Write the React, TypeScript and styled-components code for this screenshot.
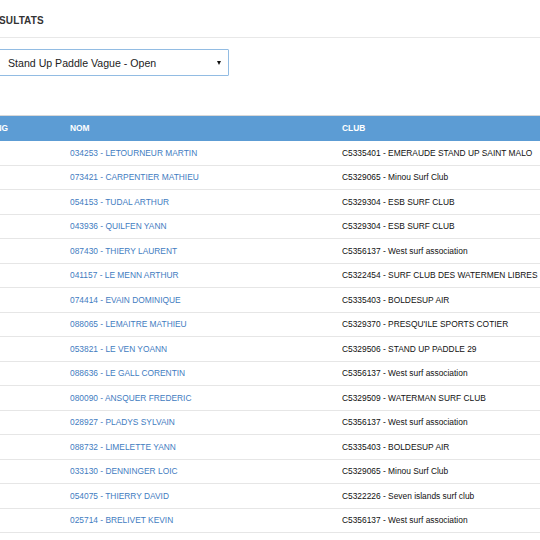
import React from "react";
import styled, { createGlobalStyle } from "styled-components";

const Global = createGlobalStyle`
  html, body { margin: 0; padding: 0; background: #fff; overflow: hidden; }
  body { font-family: "Liberation Sans", Arial, sans-serif; color: #333; }
`;

const Frame = styled.div`
  margin-left: -37px;
  width: 620px;
`;

const TitleBar = styled.div`
  height: 38px;
  border-bottom: 1px solid #e8e8e8;
  display: flex;
  align-items: center;
  padding-left: 22px;
  padding-top: 4px;
  box-sizing: border-box;
  margin-left: 37px;
`;

const Title = styled.h2`
  margin: 0 0 0 -37px;
  font-size: 10px;
  font-weight: 700;
  color: #333;
  letter-spacing: 0.1px;
`;

const SelectBox = styled.div`
  margin: 11px 0 0 35px;
  width: 231px;
  height: 27px;
  box-sizing: border-box;
  border: 1px solid #92bce3;
  border-radius: 1px;
  display: flex;
  align-items: center;
  justify-content: space-between;
  padding: 0 7px 0 9px;
  font-size: 10.6px;
  color: #222;
  background: #fff;
`;

const Caret = styled.span`
  width: 0;
  height: 0;
  border-left: 2.5px solid transparent;
  border-right: 2.5px solid transparent;
  border-top: 4.5px solid #111;
`;

const Table = styled.table`
  margin-top: 39px;
  border-collapse: collapse;
  width: 620px;
  table-layout: fixed;
  border-top: 1px solid #d8d8d8;
`;

const Th = styled.th`
  background: #5c9cd4;
  color: #fff;
  font-size: 8.4px;
  font-weight: 700;
  text-align: left;
  height: 25px;
  padding: 0 6px;
  box-sizing: border-box;
`;

const Td = styled.td<{ $link?: boolean }>`
  height: 24.5px;
  padding: 0 6px;
  box-sizing: border-box;
  border-bottom: 1px solid #e6e6e6;
  font-size: 8.4px;
  color: ${(p) => (p.$link ? "#3f7cbf" : "#111")};
  white-space: nowrap;
  overflow: hidden;
`;

const rows: [string, string][] = [
  ["034253 - LETOURNEUR MARTIN", "C5335401 - EMERAUDE STAND UP SAINT MALO"],
  ["073421 - CARPENTIER MATHIEU", "C5329065 - Minou Surf Club"],
  ["054153 - TUDAL ARTHUR", "C5329304 - ESB SURF CLUB"],
  ["043936 - QUILFEN YANN", "C5329304 - ESB SURF CLUB"],
  ["087430 - THIERY LAURENT", "C5356137 - West surf association"],
  ["041157 - LE MENN ARTHUR", "C5322454 - SURF CLUB DES WATERMEN LIBRES"],
  ["074414 - EVAIN DOMINIQUE", "C5335403 - BOLDESUP AIR"],
  ["088065 - LEMAITRE MATHIEU", "C5329370 - PRESQU'ILE SPORTS COTIER"],
  ["053821 - LE VEN YOANN", "C5329506 - STAND UP PADDLE 29"],
  ["088636 - LE GALL CORENTIN", "C5356137 - West surf association"],
  ["080090 - ANSQUER FREDERIC", "C5329509 - WATERMAN SURF CLUB"],
  ["028927 - PLADYS SYLVAIN", "C5356137 - West surf association"],
  ["088732 - LIMELETTE YANN", "C5335403 - BOLDESUP AIR"],
  ["033130 - DENNINGER LOIC", "C5329065 - Minou Surf Club"],
  ["054075 - THIERRY DAVID", "C5322226 - Seven islands surf club"],
  ["025714 - BRELIVET KEVIN", "C5356137 - West surf association"],
];

export default function App() {
  return (
    <>
      <Global />
      <Frame>
        <TitleBar>
          <Title>RÉSULTATS</Title>
        </TitleBar>
        <SelectBox>
          <span>Stand Up Paddle Vague - Open</span>
          <Caret />
        </SelectBox>
        <Table>
          <colgroup>
            <col style={{ width: 101 }} />
            <col style={{ width: 272 }} />
            <col />
          </colgroup>
          <thead>
            <tr>
              <Th>RANKING</Th>
              <Th>NOM</Th>
              <Th>CLUB</Th>
            </tr>
          </thead>
          <tbody>
            {rows.map(([n, c], i) => (
              <tr key={i}>
                <Td></Td>
                <Td $link>{n}</Td>
                <Td>{c}</Td>
              </tr>
            ))}
          </tbody>
        </Table>
      </Frame>
    </>
  );
}
